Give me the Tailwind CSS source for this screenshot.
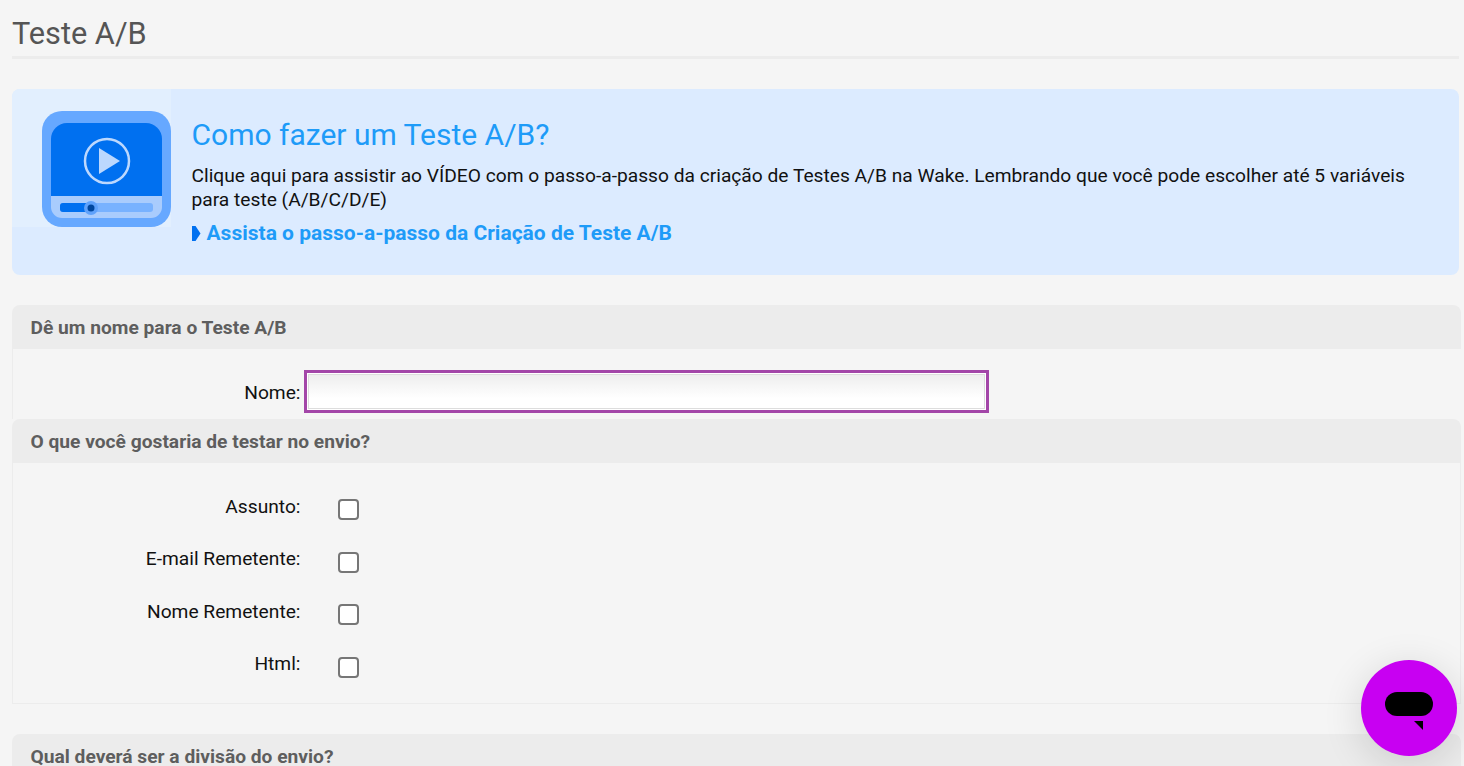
<!DOCTYPE html>
<html lang="pt-BR">
<head>
  <meta charset="utf-8"/>
  <title>Teste A/B</title>
  <script src="https://cdn.jsdelivr.net/npm/@tailwindcss/browser@4"></script>
</head>
<body class="bg-[#f5f5f5] font-['Roboto',sans-serif] h-[766px] overflow-hidden relative">
  <div class="pl-3 pr-[3px]">
    <div class="mr-[2px] h-[59px] border-b-[3px] border-[#ececec] text-[30.7px] leading-[35px] pt-[16px] text-[#555]">Teste A/B</div>

    <div class="mt-[30px] mr-[2px] h-[186px] rounded-lg bg-[#dcebff] flex overflow-hidden">
      <div class="w-[159px] h-[138px] bg-[#e2effe] pt-[22px] pl-[30px] shrink-0">
        <svg width="129" height="116" viewBox="0 0 129 116">
          <rect width="129" height="116" rx="20" fill="#66a8ff"/>
          <path d="M9 28 a16 16 0 0 1 16-16 h79 a16 16 0 0 1 16 16 v57 h-111z" fill="#0070f0"/>
          <path d="M9 85 h111 v11 a11 11 0 0 1-11 11 h-89 a11 11 0 0 1-11-11z" fill="#a9ccfd"/>
          <rect x="18" y="92" width="93" height="9" rx="3" fill="#78b2ff"/>
          <path d="M18 95 a3 3 0 0 1 3-3 h28 v9 h-28 a3 3 0 0 1-3-3z" fill="#0070f0"/>
          <circle cx="49" cy="97" r="7" fill="#5fa2fb"/>
          <circle cx="49" cy="97" r="3.5" fill="#00479f"/>
          <circle cx="65" cy="50" r="22" fill="none" stroke="#bcd8fe" stroke-width="2.5"/>
          <path d="M57 37 L78 50 L57 63z" fill="#bcd8fe"/>
        </svg>
      </div>
      <div class="pl-[20.5px] pt-[29px] pr-[30px]">
        <h2 class="text-[30px] leading-[34px] text-[#1e9bf8]">Como fazer um Teste A/B?</h2>
        <p class="mt-[12px] text-[19.2px] leading-[24px] text-[#111]">Clique aqui para assistir ao VÍDEO com o passo-a-passo da criação de Testes A/B na Wake. Lembrando que você pode escolher até 5 variáveis para teste (A/B/C/D/E)</p>
        <a class="mt-[9px] flex items-center gap-[6px] font-bold text-[21px] leading-[25px] text-[#1e9bf8]">
          <span class="w-[9px] h-[15px] bg-[#0070f0] [clip-path:polygon(0_0,45%_0,100%_50%,45%_100%,0_100%)]"></span>
          Assista o passo-a-passo da Criação de Teste A/B
        </a>
      </div>
    </div>

    <section class="mt-[30px]">
      <h3 class="h-[44px] rounded-t-lg bg-[#ececec] pl-[18.5px] leading-[46px] font-bold text-[19.2px] text-[#5e5e5e]">Dê um nome para o Teste A/B</h3>
      <div class="h-[70px] border-l border-[#ececec] flex items-start pt-[21px]">
        <label class="w-[287.5px] text-right text-[19.2px] leading-[46px] text-[#111]">Nome:</label>
        <div class="ml-[3.5px] w-[685px] h-[43px] border-[3px] border-[#a346a8] p-[1px] bg-white">
          <input type="text" class="w-full h-full border border-[#ddd] bg-gradient-to-b from-[#eeeeee] to-white to-70% outline-none"/>
        </div>
      </div>
    </section>

    <section>
      <h3 class="h-[44px] rounded-t-lg bg-[#ececec] pl-[18.5px] leading-[46px] font-bold text-[19.2px] text-[#5e5e5e]">O que você gostaria de testar no envio?</h3>
      <div class="h-[241px] border border-t-0 border-[#ececec] pt-[31px] flex flex-col gap-[26.5px]">
        <div class="flex items-center h-[26px]">
          <label class="w-[287.5px] text-right text-[19.2px] text-[#111]">Assunto:</label>
          <span class="ml-[37.5px] mt-[5px] w-[21px] h-[21px] rounded-[4px] border-2 border-[#767676] bg-white"></span>
        </div>
        <div class="flex items-center h-[26px]">
          <label class="w-[287.5px] text-right text-[19.2px] text-[#111]">E-mail Remetente:</label>
          <span class="ml-[37.5px] mt-[5px] w-[21px] h-[21px] rounded-[4px] border-2 border-[#767676] bg-white"></span>
        </div>
        <div class="flex items-center h-[26px]">
          <label class="w-[287.5px] text-right text-[19.2px] text-[#111]">Nome Remetente:</label>
          <span class="ml-[37.5px] mt-[5px] w-[21px] h-[21px] rounded-[4px] border-2 border-[#767676] bg-white"></span>
        </div>
        <div class="flex items-center h-[26px]">
          <label class="w-[287.5px] text-right text-[19.2px] text-[#111]">Html:</label>
          <span class="ml-[37.5px] mt-[5px] w-[21px] h-[21px] rounded-[4px] border-2 border-[#767676] bg-white"></span>
        </div>
      </div>
    </section>

    <section class="mt-[30px]">
      <h3 class="h-[44px] rounded-t-lg bg-[#ececec] pl-[18.5px] leading-[46px] font-bold text-[19.2px] text-[#5e5e5e]">Qual deverá ser a divisão do envio?</h3>
    </section>
  </div>

  <button class="absolute left-[1361px] top-[660px] w-[96px] h-[96px] rounded-full bg-[#c800f2] shadow-[0_8px_40px_rgba(0,0,0,0.14)] flex items-center justify-center">
    <svg width="48" height="38" viewBox="0 0 48 38" class="mt-[6px]">
      <rect width="48" height="24" rx="12" fill="#000"/>
      <path d="M29 29 H38 V38z" fill="#000"/>
    </svg>
  </button>
</body>
</html>
